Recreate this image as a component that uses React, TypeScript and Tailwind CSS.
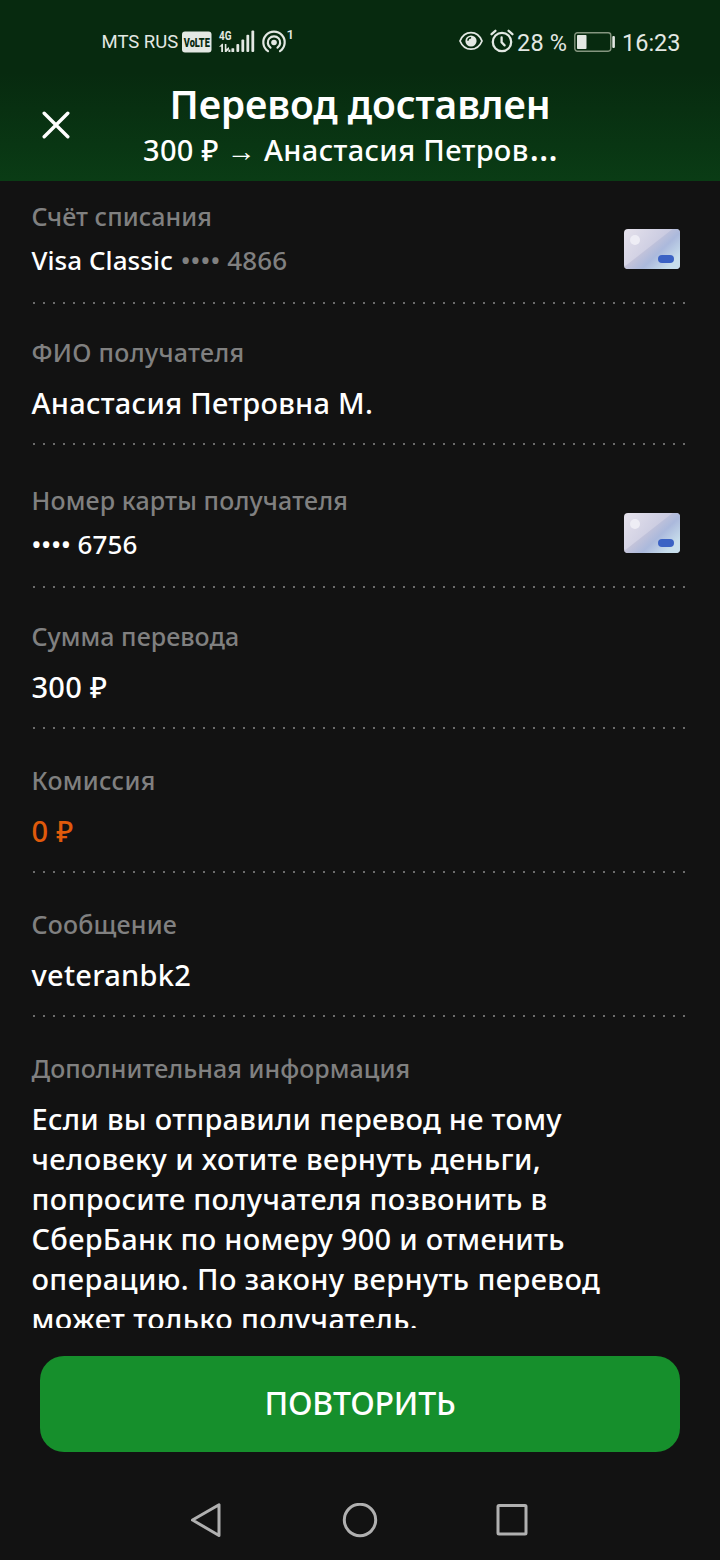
import type { ReactNode } from "react";
import clsx from "clsx";

type RowProps = {
  label: string;
  className?: string;
  card?: boolean;
  compact?: boolean;
  tracking?: string;
  children: ReactNode;
};

function SignalIcon() {
  return (
    <svg width="36" height="24" viewBox="0 0 36 24" className="ml-[7px] shrink-0 overflow-visible" fill="#e3e8e3">
      <text x="0" y="9.5" fontFamily="Roboto, sans-serif" fontWeight="700" fontSize="13" textLength="12.5" lengthAdjust="spacingAndGlyphs">4G</text>
      <path d="M0 17l3-3.2h1V22H2.2v-5.4zM5.8 14h1.6v5l2.6-2v2.2L7.4 22H5.8z" />
      <rect x="9.4" y="19.6" width="2" height="2.4" />
      <rect x="12.4" y="18.2" width="2.8" height="3.8" rx="0.6" />
      <rect x="17.4" y="14" width="2.8" height="8" rx="1" />
      <rect x="22.4" y="9.4" width="2.8" height="12.6" rx="1" />
      <rect x="27.4" y="4.8" width="2.8" height="17.2" rx="1" />
      <rect x="32.4" y="0.4" width="2.8" height="21.6" rx="1" />
    </svg>
  );
}

function VolteIcon() {
  return (
    <svg width="30" height="22" viewBox="0 0 30 22" className="ml-[3px] shrink-0 overflow-visible">
      <rect x="0" y="0.5" width="29.5" height="21" rx="3" fill="#e3e8e3" />
      <text x="1.8" y="15.8" fontFamily="Roboto, sans-serif" fontWeight="900" fontSize="13" textLength="26" lengthAdjust="spacingAndGlyphs" fill="#082a0f">VoLTE</text>
    </svg>
  );
}

function HotspotIcon() {
  return (
    <svg width="33" height="28" viewBox="0 0 33 28" className="ml-[6px] shrink-0 overflow-visible" fill="none" stroke="#e3e8e3" strokeWidth="2.2" strokeLinecap="round">
      <circle cx="13" cy="14.5" r="2.8" fill="#e3e8e3" stroke="none" />
      <path d="M9.5 19.6a6.2 6.2 0 1 1 7 0" />
      <path d="M7 23.2a10.7 10.7 0 1 1 12 0" />
      <text x="25.5" y="11" fontFamily="Roboto, sans-serif" fontWeight="500" fontSize="13.5" fill="#e3e8e3" stroke="none">1</text>
    </svg>
  );
}

function EyeIcon() {
  return (
    <svg width="24" height="20" viewBox="0 0 24 20" className="mb-[2px] shrink-0" fill="none" stroke="#e3e8e3" strokeWidth="1.8">
      <path d="M1 10C3.2 4.5 7.3 1.6 12 1.6S20.8 4.5 23 10c-2.2 5.3-6.3 8.2-11 8.2S3.2 15.3 1 10z" strokeLinejoin="round" />
      <circle cx="12" cy="10" r="5.6" fill="#e3e8e3" stroke="none" />
      <path d="M8.9 9.8a3.2 3.2 0 0 1 3.2-3.1" stroke="#082a0f" strokeWidth="1.4" />
    </svg>
  );
}

function AlarmIcon() {
  return (
    <svg width="24" height="24" viewBox="0 0 24 24" className="mb-[2px] ml-[7px] shrink-0" fill="none" stroke="#e3e8e3" strokeWidth="2.3" strokeLinecap="round">
      <circle cx="12" cy="13" r="9.2" />
      <path d="M1.6 5.2l3.8-3.4M22.4 5.2l-3.8-3.4" />
      <path d="M11.6 8.4v4.8l3 3.2" />
    </svg>
  );
}

function BatteryIcon() {
  return (
    <svg width="42" height="20" viewBox="0 0 42 20" className="shrink-0">
      <rect x="0.8" y="0.8" width="36" height="18.4" rx="2.6" fill="none" stroke="#84957f" strokeWidth="1.4" />
      <rect x="3" y="3" width="9.5" height="14" rx="0.8" fill="#e3e8e3" />
      <rect x="38.3" y="4" width="2.6" height="12" rx="1" fill="#e3e8e3" />
    </svg>
  );
}

function StatusBar() {
  return (
    <div className="flex h-[84px] items-center pl-[101.5px] text-[#e3e8e3] [font-family:Roboto,sans-serif]">
      <span className="w-[77px] shrink-0 whitespace-nowrap pt-px text-[18.5px]">MTS RUS</span>
      <VolteIcon />
      <SignalIcon />
      <HotspotIcon />
      <div className="ml-auto flex items-center pr-[38px]">
        <EyeIcon />
        <AlarmIcon />
        <span className="ml-[3px] w-[57px] whitespace-nowrap pt-[2px] text-[23.5px] leading-7 tracking-[0.2px]">28 %</span>
        <BatteryIcon />
        <span className="ml-[6px] w-[60px] whitespace-nowrap pt-[2px] text-[23.5px] leading-7">16:23</span>
      </div>
    </div>
  );
}

function CardThumb() {
  return (
    <svg width="56" height="40" viewBox="0 0 56 40" className="mt-[22px] shrink-0">
      <defs>
        <linearGradient id="card-base" x1="0" y1="0" x2="1" y2="0.5">
          <stop offset="0" stopColor="#e6e2ec" />
          <stop offset="1" stopColor="#bbbfdb" />
        </linearGradient>
        <linearGradient id="card-shade" x1="0.1" y1="0.2" x2="0.9" y2="0.8">
          <stop offset="0" stopColor="#d3cfde" />
          <stop offset="0.4" stopColor="#c3c3da" />
          <stop offset="0.65" stopColor="#abb9dc" />
          <stop offset="1" stopColor="#c8deec" />
        </linearGradient>
        <clipPath id="card-clip">
          <rect width="56" height="40" rx="4" />
        </clipPath>
      </defs>
      <g clipPath="url(#card-clip)">
        <rect width="56" height="40" fill="url(#card-base)" />
        <path d="M48.5 0L0 38v2h56V0z" fill="url(#card-shade)" />
      </g>
      <circle cx="11" cy="11" r="5" fill="#eeedf5" />
      <rect x="34" y="26" width="16" height="8" rx="4" fill="#3b62c4" />
    </svg>
  );
}

function Divider() {
  return (
    <div className="ml-[33px] h-[2px] w-[652px] bg-[repeating-linear-gradient(90deg,#6c6c6c_0px,#6c6c6c_2px,transparent_2px,transparent_10px)]" />
  );
}

function Row({ label, className, card, compact, tracking = "tracking-[0.05px]", children }: RowProps) {
  return (
    <section>
      <div className={clsx("flex items-center justify-between pl-[31.5px] pr-10", className)}>
        <div className="min-w-0">
          <div className={clsx("whitespace-nowrap text-[25px] leading-8 text-[#808080]", tracking)}>{label}</div>
          <div
            className={clsx(
              "whitespace-nowrap text-white",
              compact ? "mt-3 text-[26px] leading-8 tracking-[0.05px]" : "mt-[15px] text-[29px] leading-10 tracking-[0.27px]"
            )}
          >
            {children}
          </div>
        </div>
        {card && <CardThumb />}
      </div>
      <Divider />
    </section>
  );
}

export default function App() {
  return (
    <div className="flex h-[1560px] w-[720px] flex-col overflow-hidden bg-[#121212] font-medium [font-family:'Noto_Sans',sans-serif]">
      <header className="h-[181px] shrink-0 bg-linear-to-b from-[#072a0f] from-40% to-[#0a3c15] font-normal">
        <StatusBar />
        <div className="flex font-medium text-white">
          <svg width="28" height="28" viewBox="0 0 28 28" className="ml-[42px] mt-[27px] shrink-0" stroke="#fff" strokeWidth="3.4" strokeLinecap="round">
            <path d="M2.2 2.2l23.6 23.6M25.8 2.2L2.2 25.8" />
          </svg>
          <div className="ml-[73px] w-[434px]">
            <h1 className="whitespace-nowrap text-center text-[39px] leading-10 font-semibold tracking-[-0.1px]">Перевод доставлен</h1>
            <p className="mt-[6px] flex h-10 whitespace-nowrap text-[29px] leading-10 tracking-[0.33px]">
              300 ₽ → Анастасия Петров<span className="ml-px text-[35px] leading-9">…</span>
            </p>
          </div>
        </div>
      </header>

      <main className="h-[1147px] shrink-0 overflow-hidden">
        <Row label="Счёт списания" card compact className="pt-[19px] pb-[26px]">
          Visa Classic <span className="ml-px tracking-[0.15px] text-[#808080]">•••• 4866</span>
        </Row>
        <Row label="ФИО получателя" className="pt-8 pb-5" tracking="tracking-[0.3px]">
          Анастасия Петровна М.
        </Row>
        <Row label="Номер карты получателя" card compact className="pt-[39px] pb-[26px]" tracking="tracking-[0.15px]">
          •••• 6756
        </Row>
        <Row label="Сумма перевода" className="pt-8 pb-5">
          300 ₽
        </Row>
        <Row label="Комиссия" className="pt-[35px] pb-5" tracking="tracking-[0.3px]">
          <span className="text-[#e05a0b]">0 ₽</span>
        </Row>
        <Row label="Сообщение" className="pt-[35px] pb-5" tracking="tracking-[0.2px]">
          veteranbk2
        </Row>
        <Row label="Дополнительная информация" className="pt-[35px] pb-5">
          <p>Если вы отправили перевод не тому</p>
          <p className="tracking-[0.36px]">человеку и хотите вернуть деньги,</p>
          <p>попросите получателя позвонить в</p>
          <p>СберБанк по номеру 900 и отменить</p>
          <p className="tracking-[0.4px]">операцию. По закону вернуть перевод</p>
          <p className="tracking-[0.38px]">может только получатель.</p>
        </Row>
      </main>

      <button className="mx-10 mt-7 h-24 shrink-0 rounded-3xl bg-[#168f2c] pb-[2px] text-[32px] font-medium tracking-[-0.2px] text-white">
        ПОВТОРИТЬ
      </button>

      <nav className="mt-[51px] flex pl-[190px]">
        <svg width="339" height="36" viewBox="0 0 339 36" fill="none" stroke="#b0b0b0" strokeWidth="3" strokeLinejoin="round">
          <path d="M2.5 17L29 1.8v30.7z" />
          <circle cx="170" cy="17" r="15.7" />
          <rect x="308" y="2.5" width="28" height="28.5" rx="1" />
        </svg>
      </nav>
    </div>
  );
}
